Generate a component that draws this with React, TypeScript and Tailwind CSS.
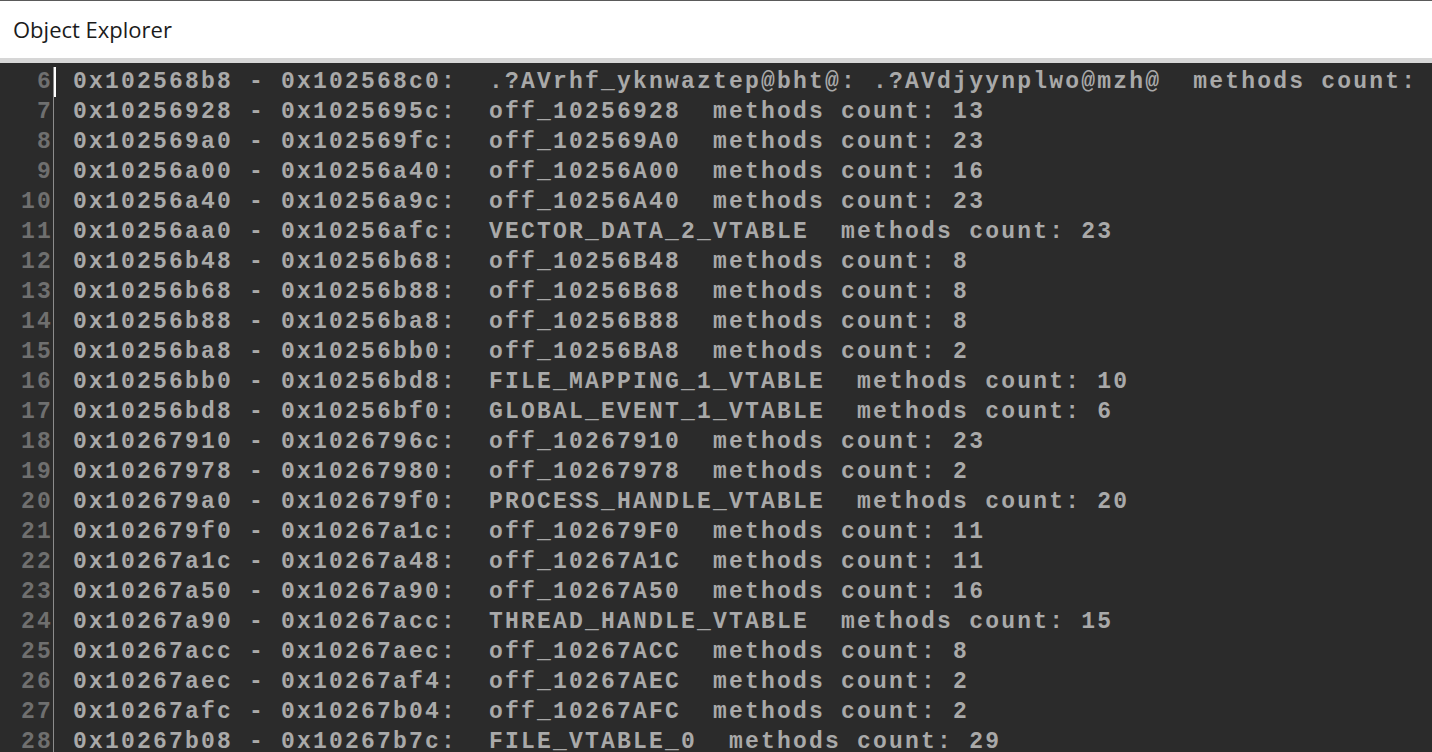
import React from 'react'

const lines: [number, string][] = [
  [6, '0x102568b8 - 0x102568c0:  .?AVrhf_yknwaztep@bht@: .?AVdjyynplwo@mzh@  methods count:'],
  [7, '0x10256928 - 0x1025695c:  off_10256928  methods count: 13'],
  [8, '0x102569a0 - 0x102569fc:  off_102569A0  methods count: 23'],
  [9, '0x10256a00 - 0x10256a40:  off_10256A00  methods count: 16'],
  [10, '0x10256a40 - 0x10256a9c:  off_10256A40  methods count: 23'],
  [11, '0x10256aa0 - 0x10256afc:  VECTOR_DATA_2_VTABLE  methods count: 23'],
  [12, '0x10256b48 - 0x10256b68:  off_10256B48  methods count: 8'],
  [13, '0x10256b68 - 0x10256b88:  off_10256B68  methods count: 8'],
  [14, '0x10256b88 - 0x10256ba8:  off_10256B88  methods count: 8'],
  [15, '0x10256ba8 - 0x10256bb0:  off_10256BA8  methods count: 2'],
  [16, '0x10256bb0 - 0x10256bd8:  FILE_MAPPING_1_VTABLE  methods count: 10'],
  [17, '0x10256bd8 - 0x10256bf0:  GLOBAL_EVENT_1_VTABLE  methods count: 6'],
  [18, '0x10267910 - 0x1026796c:  off_10267910  methods count: 23'],
  [19, '0x10267978 - 0x10267980:  off_10267978  methods count: 2'],
  [20, '0x102679a0 - 0x102679f0:  PROCESS_HANDLE_VTABLE  methods count: 20'],
  [21, '0x102679f0 - 0x10267a1c:  off_102679F0  methods count: 11'],
  [22, '0x10267a1c - 0x10267a48:  off_10267A1C  methods count: 11'],
  [23, '0x10267a50 - 0x10267a90:  off_10267A50  methods count: 16'],
  [24, '0x10267a90 - 0x10267acc:  THREAD_HANDLE_VTABLE  methods count: 15'],
  [25, '0x10267acc - 0x10267aec:  off_10267ACC  methods count: 8'],
  [26, '0x10267aec - 0x10267af4:  off_10267AEC  methods count: 2'],
  [27, '0x10267afc - 0x10267b04:  off_10267AFC  methods count: 2'],
  [28, '0x10267b08 - 0x10267b7c:  FILE_VTABLE_0  methods count: 29'],
]

export default function App() {
  return (
    <div className="h-[752px] w-[1432px] overflow-hidden flex flex-col bg-[#2b2b2b]">
      {/* title bar */}
      <div className="h-[63px] shrink-0 bg-white border-t border-[#5a5a5a] border-b-[5px] border-b-[#d6d6d6] flex items-center pl-[13px]">
        <span className="text-[22px] text-[#1b1b1b] font-['Open_Sans','Noto_Sans',sans-serif]">Object Explorer</span>
      </div>

      {/* editor */}
      <div className="flex flex-1 pt-[4px] font-['Liberation_Mono',monospace] font-bold text-[23px] leading-[30px] tracking-[2.2px]">
        <div className="w-[54px] shrink-0 border-r border-[#8c8c8c] text-right text-[#6f6f6f]">
          {lines.map(([n]) => (
            <div key={n} className="h-[30px]">{n}</div>
          ))}
        </div>
        <div className="flex-1 overflow-hidden text-[#a9a9a9]">
          {lines.map(([n, text], i) => (
            <div key={n} className="relative h-[30px] pl-[19px] whitespace-pre">
              {i === 0 && <span className="absolute left-0 top-0 h-[30px] w-[2px] bg-white" />}
              {text}
            </div>
          ))}
        </div>
      </div>
    </div>
  )
}
